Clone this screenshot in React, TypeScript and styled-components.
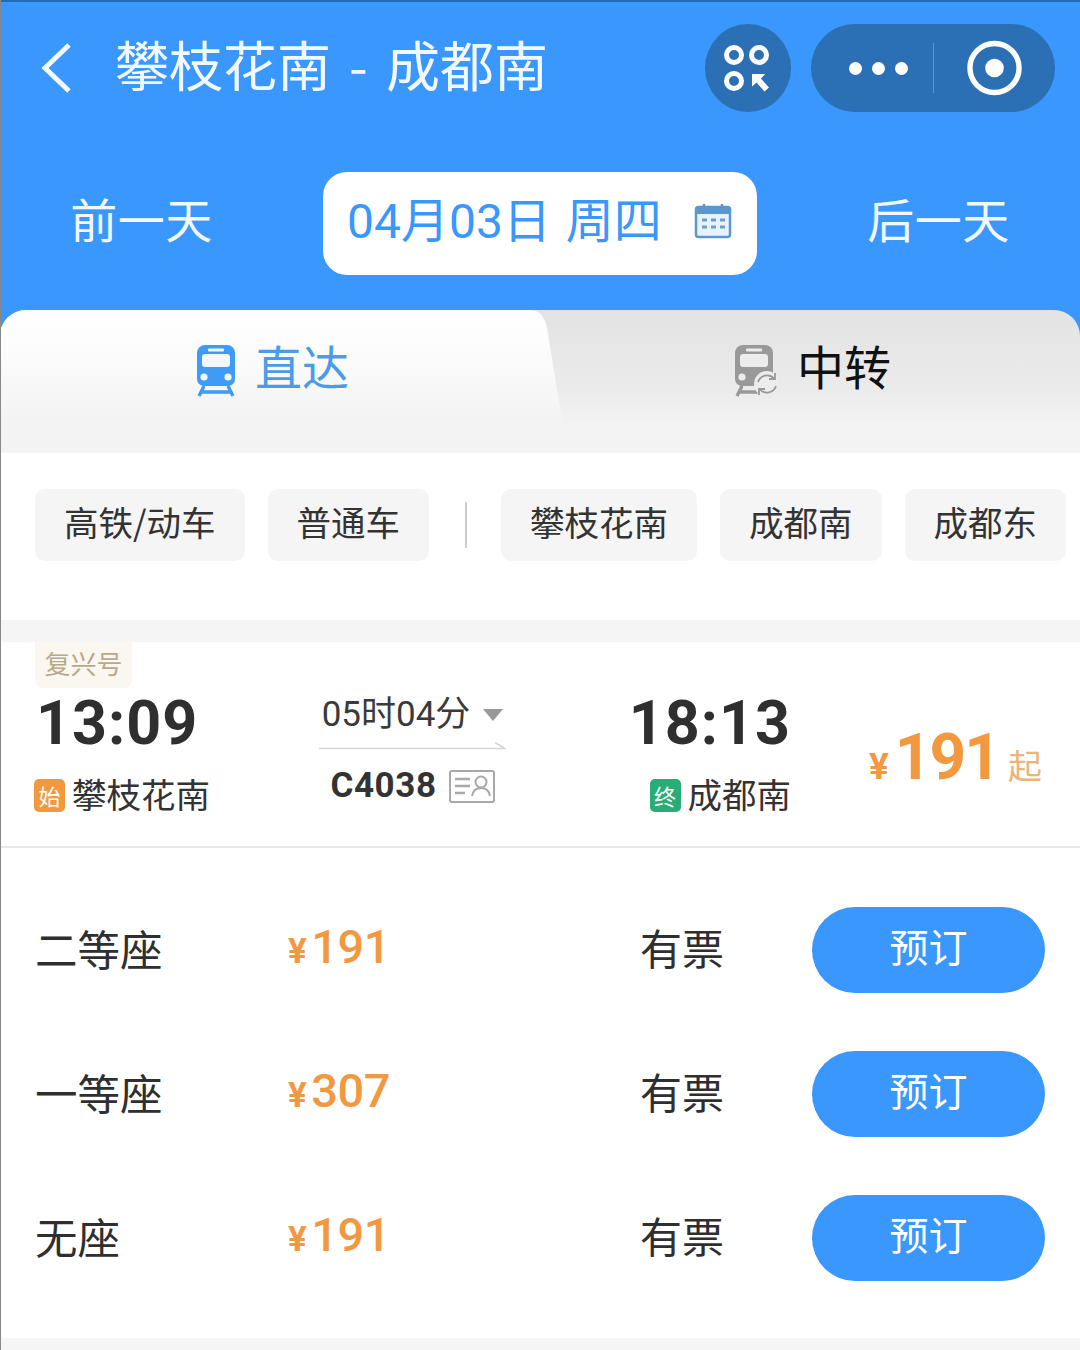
import React from 'react';
import styled, { createGlobalStyle } from 'styled-components';

const BLUE = '#3a97fd';
const ORANGE = '#f2993f';
const CJK = '"Noto Sans CJK SC", "Noto Sans", sans-serif';
const NUM = 'Roboto, "Noto Sans CJK SC", sans-serif';

const GlobalStyle = createGlobalStyle`
  html, body {
    margin: 0;
    padding: 0;
    background: #fff;
    font-family: ${CJK};
  }
`;

const Page = styled.div`
  width: 1080px;
  height: 1350px;
  overflow: hidden;
  background: #fff;
  box-sizing: border-box;
  border-left: 1px solid #888;
`;

const Header = styled.header`
  margin-left: -1px;
  background: ${BLUE};
  border-top: 2px solid #1f6db8;
`;

const NavBar = styled.div`
  height: 88px;
  padding: 22px 25px 0 40px;
  display: flex;
  align-items: center;
`;

const BackBtn = styled.svg`
  width: 34px;
  height: 54px;
  margin-right: 41px;
`;

const Title = styled.h1`
  margin: 0;
  padding-bottom: 8px;
  flex: 1;
  color: #f2f8ff;
  font-size: 54px;
  font-weight: 400;
  line-height: 80px;
  white-space: pre;
  word-spacing: 6px;
`;

const CircleBtn = styled.div`
  width: 86px;
  height: 88px;
  border-radius: 50%;
  background: #2b6fb5;
  display: flex;
  align-items: center;
  justify-content: center;
  margin-right: 20px;
`;

const Capsule = styled.div`
  width: 244px;
  height: 88px;
  border-radius: 44px;
  background: #2b6fb5;
  display: flex;
  align-items: center;
  padding: 0 33px 0 38px;
  box-sizing: border-box;
`;

const Dots = styled.div`
  display: flex;
  gap: 10px;
  margin-right: 25px;
`;

const Dot = styled.span`
  width: 13px;
  height: 13px;
  border-radius: 50%;
  background: #fff;
`;

const CapsuleDivider = styled.span`
  width: 1px;
  height: 50px;
  background: #5d93cb;
  margin-right: 33px;
`;

const DateRow = styled.div`
  display: grid;
  grid-template-columns: 323px 434px 323px;
  align-items: center;
  padding-top: 60px;
  padding-bottom: 35px;
`;

const DayLink = styled.div<{ $shift: number }>`
  color: #f2f8ff;
  font-size: 47px;
  letter-spacing: 0.5px;
  line-height: 91px;
  padding-bottom: 12px;
  text-align: center;
  margin-left: ${(p) => p.$shift}px;
`;

const DatePill = styled.div`
  height: 103px;
  background: #fff;
  border-radius: 24px;
  display: flex;
  align-items: center;
  justify-content: space-between;
  padding: 0 25px 0 24px;
  box-sizing: border-box;
  color: ${BLUE};
`;

const DateText = styled.span`
  font-family: ${NUM};
  font-size: 48px;
  line-height: 60px;
  padding-bottom: 3px;
  white-space: pre;
  word-spacing: 3px;
`;

const CalendarSvg = styled.svg`
  width: 38px;
  height: 38px;
  margin-bottom: 6px;
`;

const TabBar = styled.div`
  position: relative;
  height: 143px;
  display: grid;
  grid-template-columns: 1fr 1fr;
  border-radius: 26px 26px 0 0;
  overflow: hidden;
  background: linear-gradient(#e3e3e3, #ebebeb 55%, #f3f3f3 80%);
`;

const Tab = styled.div<{ $active?: boolean }>`
  position: relative;
  display: flex;
  align-items: flex-start;
  justify-content: center;
  gap: 18px;
  padding-top: 26px;
  font-size: 47px;
  line-height: 58px;
  color: ${(p) => (p.$active ? '#4a9be8' : '#111')};
  ${(p) => (p.$active ? 'margin-right: -4px;' : 'margin-left: -24px; padding-left: 28px;')}
`;

const TabLabel = styled.span`
  position: relative;
  z-index: 1;
`;

// slanted white shape behind the active tab
const ActiveShape = styled.div`
  position: absolute;
  left: 0;
  top: 0;
  width: 570px;
  height: 143px;
  background: linear-gradient(#fff, #fbfbfb 35%, #f3f3f3 78%);
  clip-path: path('M0 0 H530 C543 0 547 12 549 30 L562 110 L566 143 H0 Z');
`;

const TabIcon = styled.svg<{ $w: number }>`
  position: relative;
  z-index: 1;
  width: ${(p) => p.$w}px;
  height: 52px;
  margin-top: 9px;
`;

const FilterRow = styled.div`
  height: 167px;
  display: flex;
  align-items: center;
  padding: 0 0 23px 34px;
  box-sizing: border-box;
  gap: 23px;
  white-space: nowrap;
`;

const Chip = styled.div`
  height: 72px;
  padding: 0 29px;
  border-radius: 10px;
  background: #f5f5f5;
  color: #333;
  font-size: 34.5px;
  line-height: 65px;
  flex: none;
`;

const FilterDivider = styled.span`
  width: 2px;
  height: 46px;
  background: #ccc;
  margin: 0 11px 0 13px;
  flex: none;
`;

const GrayBand = styled.div`
  height: 22px;
  background: #f5f5f5;
`;

const TrainCard = styled.section`
  height: 204px;
  display: grid;
  grid-template-columns: 285px 225px 247px 1fr;
  padding-left: 33px;
  border-bottom: 2px solid #e8e8e8;
  box-sizing: content-box;
`;

const EndCol = styled.div<{ $right?: boolean }>`
  display: flex;
  flex-direction: column;
  align-items: ${(p) => (p.$right ? 'flex-end' : 'flex-start')};
`;

const TrainTag = styled.div`
  height: 46px;
  width: 97px;
  margin-left: 1px;
  background: #faf7f0;
  border-radius: 0 0 8px 8px;
  color: #b9a98b;
  font-size: 26px;
  line-height: 42px;
  text-align: center;
`;

const TagSpacer = styled.div`
  height: 46px;
`;

const Time = styled.div`
  font-family: ${NUM};
  font-weight: 700;
  font-size: 61px;
  letter-spacing: 1px;
  line-height: 66px;
  color: #2f2f2f;
  margin: 2px 0 0 2px;
`;

const Station = styled.div`
  display: flex;
  align-items: center;
  gap: 7px;
  font-size: 34.5px;
  line-height: 50px;
  color: #333;
  margin-top: 12px;
`;

const StationBadge = styled.span<{ $color: string }>`
  width: 31px;
  height: 33px;
  margin-top: 4px;
  border-radius: 5px;
  background: ${(p) => p.$color};
  color: #fff;
  font-size: 22px;
  line-height: 32px;
  text-align: center;
`;

const MidCol = styled.div`
  display: flex;
  flex-direction: column;
  align-items: center;
  padding-top: 50px;
  width: 187px;
`;

const Duration = styled.div`
  display: flex;
  align-items: center;
  gap: 13px;
  font-family: ${NUM};
  font-size: 35px;
  line-height: 46px;
  color: #3a3a3a;
`;

const Caret = styled.span`
  width: 0;
  height: 0;
  border-left: 10px solid transparent;
  border-right: 10px solid transparent;
  border-top: 12px solid #999;
`;

const ArrowLine = styled.svg`
  width: 187px;
  height: 8px;
  margin-top: 4px;
  display: block;
`;

const TrainNo = styled.div`
  display: flex;
  align-items: center;
  gap: 12px;
  margin-top: 14px;
  font-family: ${NUM};
  font-weight: 700;
  font-size: 35px;
  line-height: 44px;
  color: #333;
  letter-spacing: 0.6px;
`;

const PriceCol = styled.div`
  display: flex;
  align-items: baseline;
  justify-content: flex-end;
  padding: 74px 38px 0 0;
  color: ${ORANGE};
  font-family: ${NUM};
  line-height: 84px;
  height: 84px;
`;

const Yen = styled.span<{ $size: number; $gap: number }>`
  font-size: ${(p) => p.$size}px;
  font-weight: 700;
  margin-right: ${(p) => p.$gap}px;
`;

const BigPrice = styled.span`
  font-size: 64px;
  font-weight: 700;
  letter-spacing: -2px;
`;

const Qi = styled.span`
  font-family: ${CJK};
  font-size: 34px;
  color: #ebb47a;
  margin-left: 9px;
`;

const SeatList = styled.div`
  padding-top: 30px;
`;

const SeatRow = styled.div`
  height: 144px;
  display: grid;
  grid-template-columns: 253px 352px 172px 233px;
  align-items: center;
  padding-left: 34px;
`;

const SeatName = styled.div`
  margin-top: -6px;
  font-size: 42.5px;
  color: #2f2f2f;
`;

const SeatPrice = styled.div`
  display: flex;
  align-items: baseline;
  margin-top: -8px;
  font-family: ${NUM};
  font-weight: 500;
  font-size: 47px;
  letter-spacing: -0.5px;
  color: ${ORANGE};
`;

const Avail = styled.div`
  margin-top: -8px;
  font-size: 42px;
  color: #2f2f2f;
`;

const BookBtn = styled.button`
  width: 233px;
  height: 86px;
  border: 0;
  border-radius: 43px;
  background: ${BLUE};
  color: #fff;
  font-family: ${CJK};
  font-size: 39px;
  padding: 0 0 10px;
`;

const BottomBand = styled.div`
  height: 12px;
  margin-top: 28px;
  background: #f5f5f5;
`;

const CalendarIcon = () => (
  <CalendarSvg viewBox="0 0 38 38" fill="none">
    <path d="M10 2v6M28 2v6" stroke="#5b97cf" strokeWidth="2.5" />
    <rect x="2" y="5" width="34" height="30" rx="2.5" fill="#e6f3ff" stroke="#5b97cf" strokeWidth="2.5" />
    <rect x="2" y="5" width="34" height="7" fill="#5b97cf" />
    <path d="M8 18h5M17 18h5M26 18h5M8 25h5M17 25h5M26 25h5" stroke="#6f9ec9" strokeWidth="3" />
  </CalendarSvg>
);

const ScanIcon = () => (
  <svg width="50" height="50" viewBox="0 0 50 50" fill="none" stroke="#fff" strokeWidth="5">
    <circle cx="11" cy="12" r="7.5" />
    <circle cx="36" cy="12" r="7.5" />
    <circle cx="11" cy="38" r="7.5" />
    <path d="M29 31h13l-4 4.5 8 9-4.5 4-8-9-4.5 4z" fill="#fff" stroke="none" />
  </svg>
);

const TargetIcon = () => (
  <svg width="56" height="56" viewBox="0 0 56 56" fill="none">
    <circle cx="28" cy="28" r="25" stroke="#fff" strokeWidth="5.5" />
    <circle cx="28" cy="28" r="9.5" fill="#fff" />
  </svg>
);

const TrainShape = ({ color, bg }: { color: string; bg: string }) => (
  <>
    <path d="M10 0h22a8 8 0 0 1 8 8v26a7 7 0 0 1-7 7H9a7 7 0 0 1-7-7V8a8 8 0 0 1 8-8z" fill={color} />
    <rect x="13" y="3.5" width="16" height="3" rx="1" fill={bg} />
    <rect x="7" y="9" width="28" height="13" rx="3" fill={bg} />
    <circle cx="9" cy="32" r="3.6" fill={bg} />
    <circle cx="33" cy="32" r="3.6" fill={bg} />
    <path d="M9 41 4 51M33 41l5 10M7 47h28" stroke={color} strokeWidth="3.4" fill="none" />
  </>
);

const DirectIcon = () => (
  <TabIcon $w={42} viewBox="0 0 42 52">
    <TrainShape color="#3f9bf5" bg="#f2f8fe" />
  </TabIcon>
);

const TransferIcon = () => (
  <TabIcon $w={46} viewBox="0 0 46 52">
    <TrainShape color="#999" bg="#ececec" />
    <circle cx="34" cy="39" r="13" fill="#ececec" />
    <path d="M25 37a9.5 9.5 0 0 1 16-3.5M43 41a9.5 9.5 0 0 1-16 3.5" stroke="#999" strokeWidth="1.8" fill="none" />
    <path d="M42 28v6h-6M26 50v-6h6" stroke="#999" strokeWidth="1.8" fill="none" />
  </TabIcon>
);

const IdCardIcon = () => (
  <svg width="46" height="33" viewBox="0 0 46 33" fill="none" stroke="#a8a8a8" strokeWidth="2">
    <rect x="1" y="1" width="44" height="31" rx="2" />
    <path d="M6 9h15M6 16h15M6 23h10" strokeWidth="2.4" />
    <circle cx="32" cy="12" r="5.5" />
    <path d="M23 26c1-6 5-8 9-8s8 2 9 8" />
  </svg>
);

const SEATS = [
  { name: '二等座', price: '191' },
  { name: '一等座', price: '307' },
  { name: '无座', price: '191' },
];

export default function App() {
  return (
    <Page>
      <GlobalStyle />
      <Header>
        <NavBar>
          <BackBtn viewBox="0 0 34 54" fill="none">
            <path d="M29 4 5 27l24 23" stroke="#f2f8ff" strokeWidth="5" />
          </BackBtn>
          <Title>攀枝花南 - 成都南</Title>
          <CircleBtn>
            <ScanIcon />
          </CircleBtn>
          <Capsule>
            <Dots>
              <Dot />
              <Dot />
              <Dot />
            </Dots>
            <CapsuleDivider />
            <TargetIcon />
          </Capsule>
        </NavBar>
        <DateRow>
          <DayLink $shift={-40}>前一天</DayLink>
          <DatePill>
            <DateText>04月03日 周四</DateText>
            <CalendarIcon />
          </DatePill>
          <DayLink $shift={40}>后一天</DayLink>
        </DateRow>
        <TabBar>
          <ActiveShape />
          <Tab $active>
            <DirectIcon />
            <TabLabel>直达</TabLabel>
          </Tab>
          <Tab>
            <TransferIcon />
            <TabLabel>中转</TabLabel>
          </Tab>
        </TabBar>
      </Header>

      <FilterRow>
        <Chip>高铁/动车</Chip>
        <Chip>普通车</Chip>
        <FilterDivider />
        <Chip>攀枝花南</Chip>
        <Chip>成都南</Chip>
        <Chip>成都东</Chip>
      </FilterRow>
      <GrayBand />

      <TrainCard>
        <EndCol>
          <TrainTag>复兴号</TrainTag>
          <Time>13:09</Time>
          <Station>
            <StationBadge $color={ORANGE}>始</StationBadge>
            攀枝花南
          </Station>
        </EndCol>
        <MidCol>
          <Duration>
            05时04分
            <Caret />
          </Duration>
          <ArrowLine viewBox="0 0 187 8" fill="none">
            <path d="M0 6.5h186l-10-6" stroke="#d5d5d5" strokeWidth="1.6" />
          </ArrowLine>
          <TrainNo>
            C4038
            <IdCardIcon />
          </TrainNo>
        </MidCol>
        <EndCol $right>
          <TagSpacer />
          <Time>18:13</Time>
          <Station>
            <StationBadge $color="#27ad75">终</StationBadge>
            成都南
          </Station>
        </EndCol>
        <PriceCol>
          <Yen $size={37} $gap={6}>¥</Yen>
          <BigPrice>191</BigPrice>
          <Qi>起</Qi>
        </PriceCol>
      </TrainCard>

      <SeatList>
        {SEATS.map((seat) => (
          <SeatRow key={seat.name}>
            <SeatName>{seat.name}</SeatName>
            <SeatPrice>
              <Yen $size={35} $gap={5}>¥</Yen>
              {seat.price}
            </SeatPrice>
            <Avail>有票</Avail>
            <BookBtn>预订</BookBtn>
          </SeatRow>
        ))}
      </SeatList>
      <BottomBand />
    </Page>
  );
}
